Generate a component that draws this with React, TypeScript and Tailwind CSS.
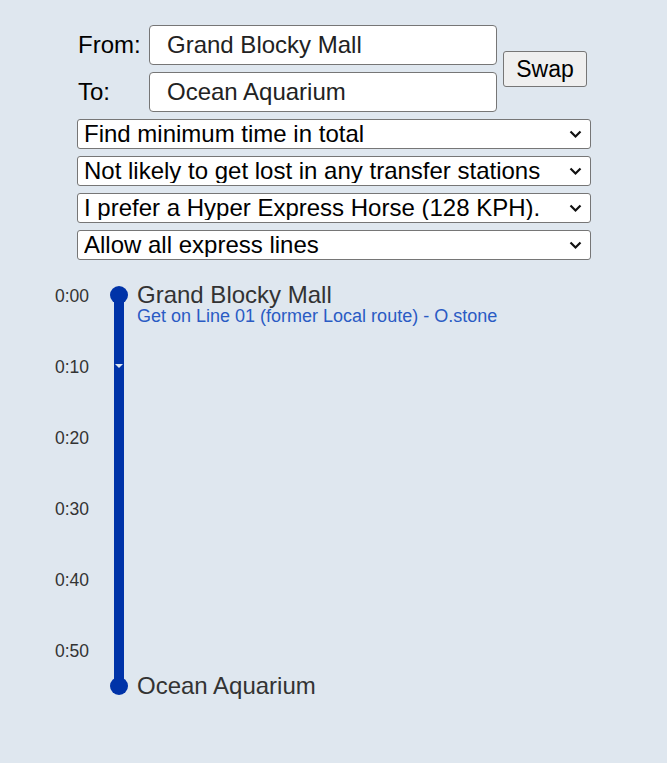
import React from "react";

const selects = [
  "Find minimum time in total",
  "Not likely to get lost in any transfer stations",
  "I prefer a Hyper Express Horse (128 KPH).",
  "Allow all express lines",
];

const PX_PER_MIN = 7.1;
const ORIGIN = 15; // y of 0:00 inside timeline box

function Chevron() {
  return (
    <svg width="13" height="9" viewBox="0 0 13 9" className="pointer-events-none absolute right-[9px] top-1/2 -translate-y-1/2">
      <path d="M1.5 2 L6.5 7 L11.5 2" fill="none" stroke="#111" strokeWidth="2.2" />
    </svg>
  );
}

export default function App() {
  const ticks = [0, 10, 20, 30, 40, 50];
  const total = 55;
  return (
    <div
      className="min-h-[763px] w-full bg-[#dfe7ef] text-black"
      style={{ fontFamily: '"Liberation Sans", Arial, sans-serif' }}
    >
      <div className="ml-[77px] w-[514px] pt-[25px]">
        <div className="flex items-center">
          <div className="flex flex-col gap-[7px]">
            <div className="flex items-center">
              <label className="w-[72px] pl-[1px] text-[24px] leading-none">From:</label>
              <input
                readOnly
                value="Grand Blocky Mall"
                className="h-[40px] w-[348px] rounded-[4px] border border-[#767676] bg-white pl-[17px] text-[24px] text-[#222] outline-none"
              />
            </div>
            <div className="flex items-center">
              <label className="w-[72px] pl-[1px] text-[24px] leading-none">To:</label>
              <input
                readOnly
                value="Ocean Aquarium"
                className="h-[40px] w-[348px] rounded-[4px] border border-[#767676] bg-white pl-[17px] text-[24px] text-[#222] outline-none"
              />
            </div>
          </div>
          <button className="ml-[6px] h-[36px] w-[84px] rounded-[3px] border border-[#767676] bg-[#efefef] pt-[2px] text-[23px] leading-none text-black">
            Swap
          </button>
        </div>
        <div className="mt-[7px] flex flex-col gap-[7px]">
          {selects.map((s) => (
            <div key={s} className="relative">
              <select
                className="h-[30px] w-full appearance-none rounded-[3px] border border-[#767676] bg-white pl-[6px] text-[24px] leading-none text-black outline-none"
                defaultValue={s}
              >
                <option>{s}</option>
              </select>
              <Chevron />
            </div>
          ))}
        </div>
      </div>

      <div className="relative mt-[20px] h-[430px]">
        {ticks.map((t) => (
          <div
            key={t}
            className="absolute left-[55px] -translate-y-1/2 pt-[3px] text-[17.5px] leading-none text-[#333]"
            style={{ top: ORIGIN + t * PX_PER_MIN }}
          >
            0:{t === 0 ? "00" : t}
          </div>
        ))}
        <div
          className="absolute left-[114px] w-[10px] bg-[#0033a8]"
          style={{ top: ORIGIN, height: total * PX_PER_MIN }}
        />
        <div
          className="absolute left-[110px] h-[18px] w-[18px] -translate-y-1/2 rounded-full bg-[#0033a8]"
          style={{ top: ORIGIN }}
        />
        <div
          className="absolute left-[110px] h-[18px] w-[18px] -translate-y-1/2 rounded-full bg-[#0033a8]"
          style={{ top: ORIGIN + total * PX_PER_MIN }}
        />
        <svg
          width="8"
          height="5"
          viewBox="0 0 8 5"
          className="absolute left-[115px]"
          style={{ top: ORIGIN + 10 * PX_PER_MIN - 2 }}
        >
          <path d="M0 0 L8 0 L4 4 Z" fill="#dfe7ef" />
        </svg>
        <div className="absolute left-[137px]" style={{ top: ORIGIN - 14 }}>
          <div className="text-[24px] leading-[28px] text-[#333]">Grand Blocky Mall</div>
          <div className="-mt-[2px] text-[18px] leading-[18px] text-[#2a5bc4]">
            Get on Line 01 (former Local route) - O.stone
          </div>
        </div>
        <div
          className="absolute left-[137px] -translate-y-1/2 text-[24px] leading-[28px] text-[#333]"
          style={{ top: ORIGIN + total * PX_PER_MIN }}
        >
          Ocean Aquarium
        </div>
      </div>
    </div>
  );
}
